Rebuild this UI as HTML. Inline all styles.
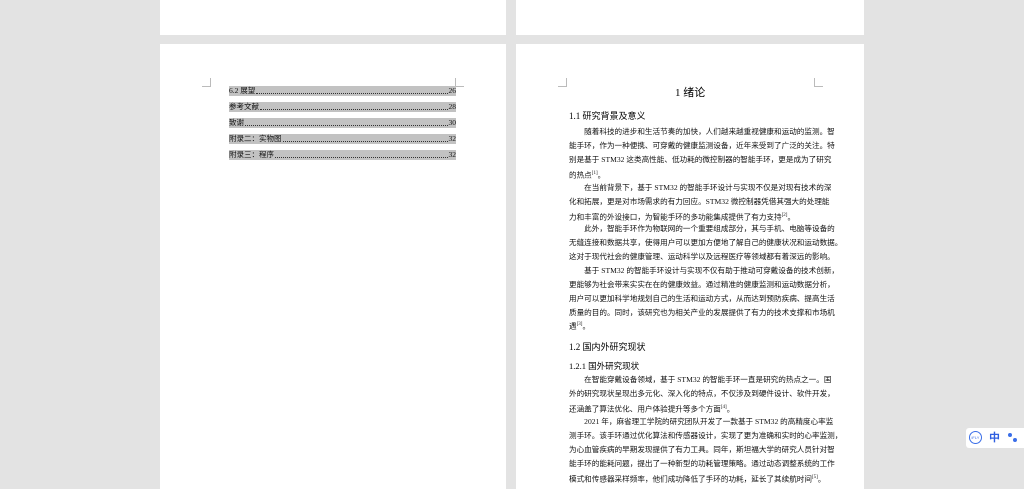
<!DOCTYPE html>
<html><head><meta charset="utf-8"><style>
body{margin:0;width:1024px;height:483px;background:#e3e3e3;position:relative;overflow:hidden;font-family:"Liberation Serif","Noto Serif CJK SC",serif;color:#111}
.pg{position:absolute;background:#fff}
.l{position:absolute;left:569px;width:245px;font-size:7.6px;line-height:10px;white-space:nowrap;text-align:justify;text-align-last:justify;color:#111;font-family:"Liberation Serif","Noto Sans CJK SC",serif}
.l.e{text-align-last:left}
.t{position:absolute;left:229px;width:227px;height:10px;background:#c2c2c2;font-size:7.5px;line-height:10px;color:#111;display:flex;font-family:"Liberation Serif","Noto Sans CJK SC",serif}
.t .d{flex:1;border-bottom:1px dotted #333;margin:0 1px 2px}
.c{position:absolute;width:8px;height:8px}
h1,h2,h3{margin:0;position:absolute;font-weight:normal;white-space:nowrap;font-family:"Liberation Serif","Noto Sans CJK SC",serif;color:#000}
sup{font-size:5px}
</style></head><body>
<div class="pg" style="left:160px;top:0;width:346px;height:35px"></div>
<div class="pg" style="left:516px;top:0;width:348px;height:35px"></div>
<div class="pg" style="left:160px;top:44px;width:346px;height:445px"></div>
<div class="pg" style="left:516px;top:44px;width:348px;height:445px"></div>
<div class="c" style="left:202px;top:78px;border-right:1px solid #bbb;border-bottom:1px solid #bbb"></div>
<div class="c" style="left:455px;top:78px;border-left:1px solid #bbb;border-bottom:1px solid #bbb"></div>
<div class="c" style="left:558px;top:78px;border-right:1px solid #bbb;border-bottom:1px solid #bbb"></div>
<div class="c" style="left:814px;top:78px;border-left:1px solid #bbb;border-bottom:1px solid #bbb"></div>
<div class="t" style="top:86px"><span>6.2 展望</span><span class="d"></span><span>26</span></div>
<div class="t" style="top:102px"><span>参考文献</span><span class="d"></span><span>28</span></div>
<div class="t" style="top:118px"><span>致谢</span><span class="d"></span><span>30</span></div>
<div class="t" style="top:134px"><span>附录二：实物图</span><span class="d"></span><span>32</span></div>
<div class="t" style="top:150px"><span>附录三：程序</span><span class="d"></span><span>32</span></div>
<h1 style="left:675px;top:86px;font-size:11px;line-height:14px">1 绪论</h1>
<h2 style="left:569px;top:110px;font-size:9px;line-height:12px">1.1 研究背景及意义</h2>
<div class="l" style="top:127px">　　随着科技的进步和生活节奏的加快，人们越来越重视健康和运动的监测。智</div>
<div class="l" style="top:141px">能手环，作为一种便携、可穿戴的健康监测设备，近年来受到了广泛的关注。特</div>
<div class="l" style="top:155px">别是基于 STM32 这类高性能、低功耗的微控制器的智能手环，更是成为了研究</div>
<div class="l e" style="top:169px">的热点<sup>[1]</sup>。</div>
<div class="l" style="top:183px">　　在当前背景下，基于 STM32 的智能手环设计与实现不仅是对现有技术的深</div>
<div class="l" style="top:197px">化和拓展，更是对市场需求的有力回应。STM32 微控制器凭借其强大的处理能</div>
<div class="l e" style="top:211px">力和丰富的外设接口，为智能手环的多功能集成提供了有力支持<sup>[2]</sup>。</div>
<div class="l" style="top:224px">　　此外，智能手环作为物联网的一个重要组成部分，其与手机、电脑等设备的</div>
<div class="l" style="top:238px">无缝连接和数据共享，使得用户可以更加方便地了解自己的健康状况和运动数据。</div>
<div class="l e" style="top:252px">这对于现代社会的健康管理、运动科学以及远程医疗等领域都有着深远的影响。</div>
<div class="l" style="top:266px">　　基于 STM32 的智能手环设计与实现不仅有助于推动可穿戴设备的技术创新，</div>
<div class="l" style="top:280px">更能够为社会带来实实在在的健康效益。通过精准的健康监测和运动数据分析，</div>
<div class="l" style="top:294px">用户可以更加科学地规划自己的生活和运动方式，从而达到预防疾病、提高生活</div>
<div class="l" style="top:308px">质量的目的。同时，该研究也为相关产业的发展提供了有力的技术支撑和市场机</div>
<div class="l e" style="top:320px">遇<sup>[3]</sup>。</div>
<h2 style="left:569px;top:341px;font-size:9px;line-height:12px">1.2 国内外研究现状</h2>
<h3 style="left:569px;top:360px;font-size:8.5px;line-height:12px">1.2.1 国外研究现状</h3>
<div class="l" style="top:375px">　　在智能穿戴设备领域，基于 STM32 的智能手环一直是研究的热点之一。国</div>
<div class="l" style="top:389px">外的研究现状呈现出多元化、深入化的特点，不仅涉及到硬件设计、软件开发，</div>
<div class="l e" style="top:403px">还涵盖了算法优化、用户体验提升等多个方面<sup>[4]</sup>。</div>
<div class="l" style="top:417px">　　2021 年，麻省理工学院的研究团队开发了一款基于 STM32 的高精度心率监</div>
<div class="l" style="top:431px">测手环。该手环通过优化算法和传感器设计，实现了更为准确和实时的心率监测，</div>
<div class="l" style="top:445px">为心血管疾病的早期发现提供了有力工具。同年，斯坦福大学的研究人员针对智</div>
<div class="l" style="top:459px">能手环的能耗问题，提出了一种新型的功耗管理策略。通过动态调整系统的工作</div>
<div class="l e" style="top:473px">模式和传感器采样频率，他们成功降低了手环的功耗，延长了其续航时间<sup>[5]</sup>。</div>
<div style="position:absolute;left:966px;top:428px;width:58px;height:20px;background:#fff;border-radius:3px 0 0 3px">
<div style="position:absolute;left:3px;top:3px;width:11px;height:11px;border:1.5px solid #3a6ee8;border-radius:50%;font-size:4px;color:#3a6ee8;text-align:center;line-height:11px;font-family:'Liberation Sans',sans-serif">iFLY</div>
<div style="position:absolute;left:23px;top:3px;font-size:11px;color:#2f5fe0;font-family:'Noto Sans CJK SC',sans-serif;line-height:13px;font-weight:bold">中</div>
<div style="position:absolute;left:42px;top:5px;width:4px;height:4px;border-radius:50%;background:#3a6ee8"></div>
<div style="position:absolute;left:47px;top:10px;width:4px;height:4px;border-radius:50%;background:#3a6ee8"></div>
</div>
</body></html>
